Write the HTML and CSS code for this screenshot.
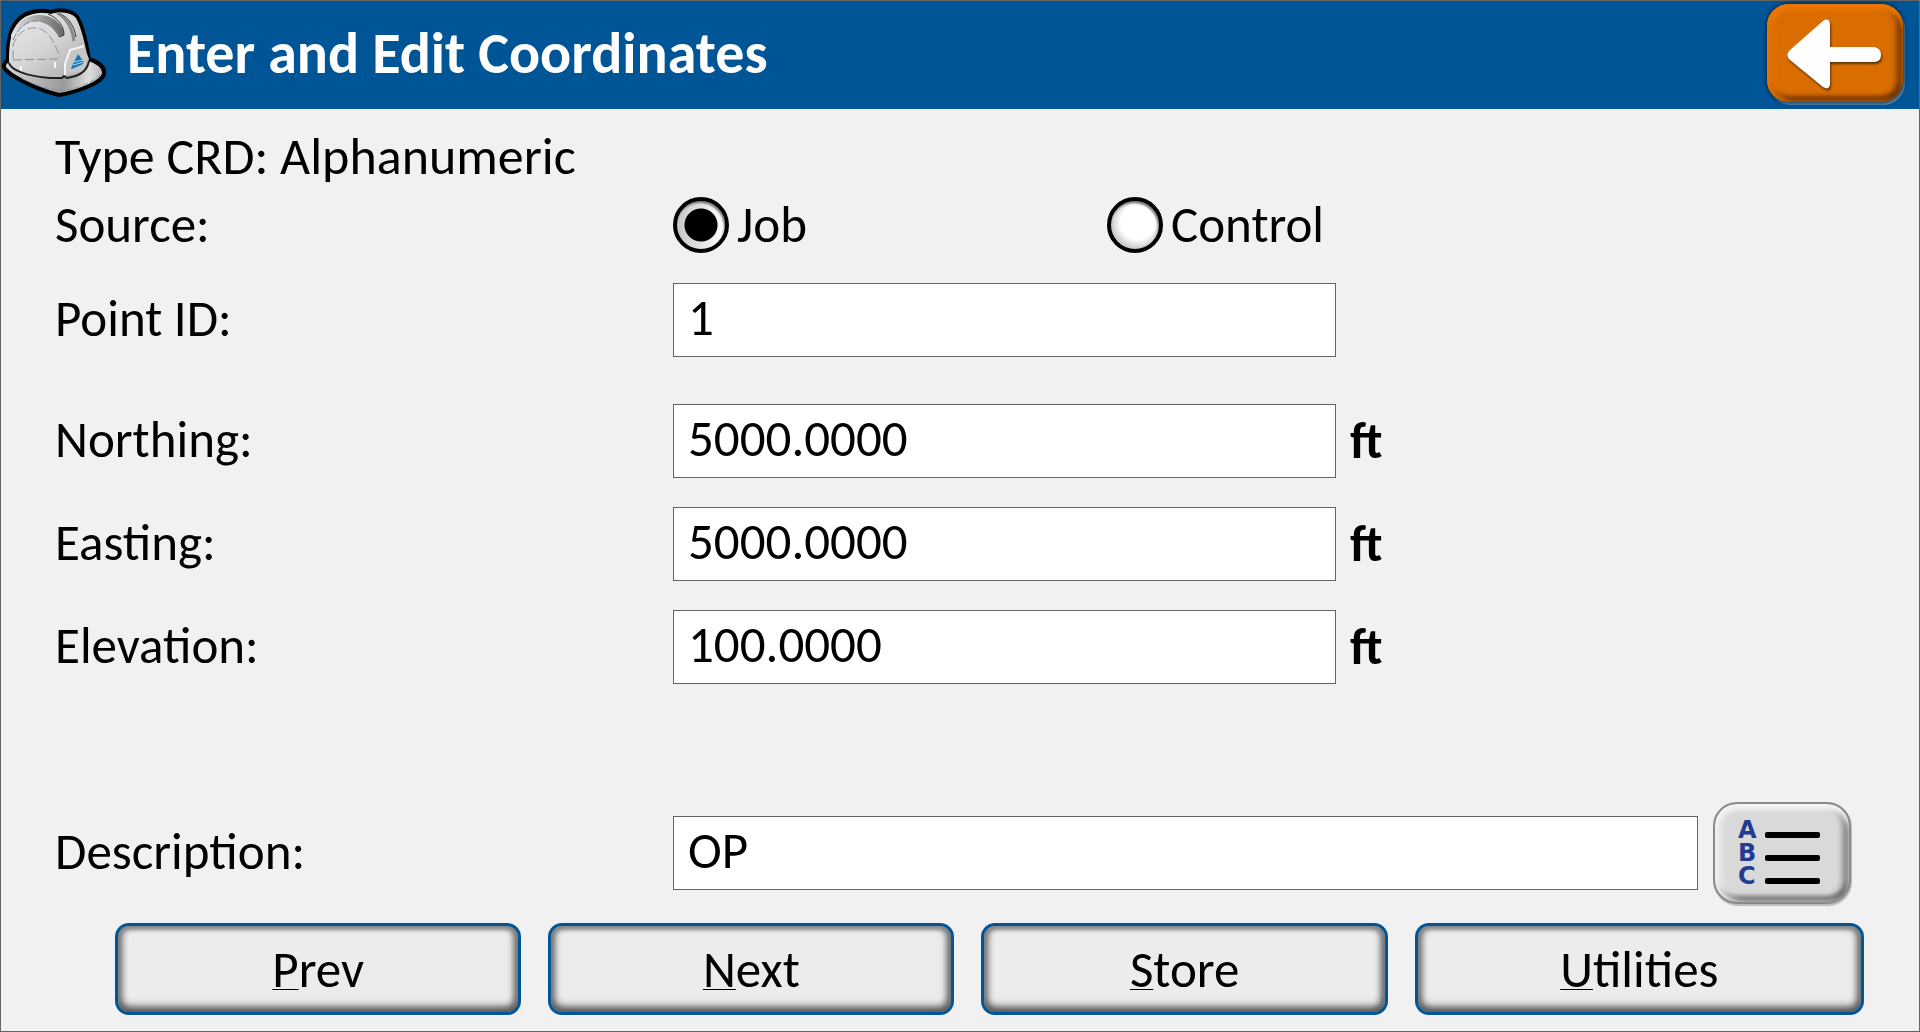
FILE: index.html
```html
<!DOCTYPE html>
<html lang="en">
<head>
<meta charset="utf-8">
<title>Enter and Edit Coordinates</title>
<link rel="stylesheet" href="styles.css">
</head>
<body>
<form class="window">
  <header class="titlebar">
    <svg class="logo" viewBox="0 0 106 96" aria-hidden="true">
      <defs>
        <linearGradient id="shell" x1="0" y1="0" x2="1" y2="1">
          <stop offset="0" stop-color="#ececec"/><stop offset=".5" stop-color="#d4d4d4"/><stop offset="1" stop-color="#a8a8a8"/>
        </linearGradient>
        <linearGradient id="brim" x1="0" y1="0" x2="1" y2="0">
          <stop offset="0" stop-color="#d8d8d8"/><stop offset=".6" stop-color="#9a9a9a"/><stop offset=".85" stop-color="#dedede"/><stop offset="1" stop-color="#b0b0b0"/>
        </linearGradient>
        <linearGradient id="ridge" x1="0" y1="0" x2="1" y2="0">
          <stop offset="0" stop-color="#e6e6e6"/><stop offset="1" stop-color="#666"/>
        </linearGradient>
      </defs>
      <path d="M7 60C6 40 9 27 18 18C25 11 39 8 50 11C58 8 71 9 76 16C82 25 85 42 88 58C97 61 104 66 103 73C101 82 76 91 58 94C46 91 28 84 16 77C7 72 2 67 3 64C4 61 5 60 7 60Z" fill="url(#brim)" stroke="#000" stroke-width="4" stroke-linejoin="round"/>
      <path d="M8 60C8 42 10 28 19 20C27 13 39 11 50 13C58 11 70 11 75 17C80 26 84 42 87 59C86 70 76 75 63 76C42 77 18 73 9 66Z" fill="url(#shell)"/>
      <path d="M10 34C16 20 27 14 38 14C52 14 62 23 63 34L58 36C52 26 44 20 34 20C23 21 15 30 11 43Z" fill="url(#ridge)"/>
      <path d="M47 13C57 17 63 25 63 34L58 36M58 12C67 16 73 24 75 36" fill="none" stroke="#333" stroke-width="1"/>
      <path d="M56 12C66 17 71 26 73 40" fill="none" stroke="#888" stroke-width="3"/>
      <path d="M12 39C18 26 26 20 35 20C44 20 53 25 58 35" fill="none" stroke="#71889b" stroke-dasharray="7 2"/>
      <path d="M12 58V44C17 31 26 26 35 27C47 28 54 42 59 56M12 59L57 58" fill="none" stroke="#8295a5" stroke-dasharray="9 3"/>
      <path d="M63 74L64 63L69 49L83 45L88 58Q87 66 80 71Z" fill="#c6c6c6"/>
      <path d="M64 74L64 63L69 49L83 45" fill="none" stroke="#f5f5f5" stroke-width="2"/>
      <path d="M20 65V72M54 61V67" stroke="#f8f8f8" stroke-width="2"/>
      <path d="M8 62C10 69 25 75 49 77L61 77L63 75L66 77C78 75 86 71 88 60" fill="none" stroke="#222" stroke-width="2"/>
      <path d="M20 77C35 84 47 89 61 89C77 89 92 81 100 73" fill="none" stroke="#8196a6" stroke-dasharray="6 2"/>
      <path d="M70 67L77 53L83 61L82 63L71 68Z" fill="#1475b9"/>
      <path d="M73 61L82 59M72 64L83 61" stroke="#bddcf0" stroke-width="1"/>
    </svg>
    <h1 class="title">Enter and Edit Coordinates</h1>
    <button class="back" type="button" aria-label="Back">
      <svg viewBox="0 0 136 98" aria-hidden="true">
        <path class="arrow" d="M23 46L56 17Q62 13 63 20V43H107Q114 44 114 51Q114 58 107 58H63V80Q62 87 56 83L23 56Q18 51 23 46Z"/>
      </svg>
    </button>
  </header>

  <main class="fields">
    <p class="line type">Type CRD: Alphanumeric</p>
    <div class="row line" role="radiogroup" aria-labelledby="source">
      <span id="source">Source:</span>
      <div class="options">
        <label class="option"><input type="radio" name="source" checked>Job</label>
        <label class="option"><input type="radio" name="source">Control</label>
      </div>
    </div>
    <div class="row point">
      <label for="point">Point ID:</label>
      <input class="box" id="point" type="text" value="1">
    </div>
    <div class="coords">
      <div class="row">
        <label for="north">Northing:</label>
        <input class="box" id="north" type="text" value="5000.0000"><b>ft</b>
      </div>
      <div class="row">
        <label for="east">Easting:</label>
        <input class="box" id="east" type="text" value="5000.0000"><b>ft</b>
      </div>
      <div class="row">
        <label for="elev">Elevation:</label>
        <input class="box" id="elev" type="text" value="100.0000"><b>ft</b>
      </div>
    </div>
    <div class="row">
      <label for="desc">Description:</label>
      <div class="describe">
        <input class="box" id="desc" type="text" value="OP">
        <button class="codes" type="button" aria-label="Description list">
          <span class="code"><span>A</span></span>
          <span class="code"><span>B</span></span>
          <span class="code"><span>C</span></span>
        </button>
      </div>
    </div>
  </main>

  <footer class="actions">
    <button class="action" type="button"><u>P</u>rev</button>
    <button class="action" type="button"><u>N</u>ext</button>
    <button class="action" type="button"><u>S</u>tore</button>
    <button class="action" type="button"><u>U</u>tilities</button>
  </footer>
</form>
</body>
</html>
```

FILE: styles.css
```css
* { box-sizing: border-box; }

body {
  margin: 0;
  background: #f1f1f1;
  color: #000;
  font: 51px/64px Calibri, Carlito, "Open Sans", sans-serif;
}

button, input { font: inherit; color: inherit; margin: 0; }

.window {
  min-height: 100vh;
  border: 1px solid #646464;
}

.titlebar {
  display: flex;
  align-items: flex-start;
  height: 108px;
  padding-right: 16px;
  background: #005596;
  color: #fff;
}

.logo { width: 106px; height: 96px; flex: none; }

.title {
  flex: 1;
  margin: 0 0 0 20px;
  font-size: 58px;
  line-height: 106px;
  font-weight: bold;
}

.back {
  width: 136px;
  height: 98px;
  margin-top: 3px;
  padding: 0;
  border: 0;
  border-radius: 22px;
  background: #d96d00;
  box-shadow: inset 0 6px 5px #ee7800, inset 6px 0 6px #e57200,
    inset 0 -6px 4px #6e3500, inset -6px 0 6px #6e3500,
    0 0 4px 1px #00274a, 2px 3px 1px #6a93b5;
}

.back svg { display: block; width: 100%; height: 100%; }

.arrow { fill: #fff; filter: drop-shadow(1px 2px 1px #5a3008); }

.fields { padding: 14px 56px 19px 54px; }

.line { margin: 0; height: 68px; line-height: 68px; }

.type { font-size: 52px; line-height: 66px; }

.row {
  display: grid;
  grid-template-columns: 618fr 663fr 527fr;
  align-items: center;
}

.row > label { padding-bottom: 2px; }

.row b { padding-left: 14px; }

.point { margin: 24px 0 47px; }

.coords { display: grid; gap: 29px; margin-bottom: 118px; }

.box {
  width: 100%;
  min-width: 0;
  height: 74px;
  padding: 0 14px 6px;
  border: 1px solid #646464;
  border-radius: 0;
  background: #fff;
}

.options, .describe { grid-column: 2 / 4; display: flex; }

.option {
  display: flex;
  align-items: center;
  gap: 8px;
  flex: 0 0 434px;
}

.option input {
  appearance: none;
  width: 56px;
  height: 56px;
  border: 4px solid #000;
  border-radius: 50%;
  background: radial-gradient(circle at 55% 45%, #fff 45%, #c4c4c4 72%);
  box-shadow: inset -1px 2px 2px #777;
}

.option input:checked {
  background: radial-gradient(circle, #000 16px, transparent 17px),
    linear-gradient(90deg, #c8c8c8, #fff);
}

.describe { align-items: center; gap: 15px; padding-right: 12px; }

.describe .box { flex: 1; }

.codes {
  display: flex;
  flex: none;
  flex-direction: column;
  justify-content: center;
  width: 138px;
  height: 102px;
  padding: 0 29px 0 23px;
  border: 2px solid #8a8a8a;
  border-radius: 24px;
  background: #d9d9d9;
  box-shadow: inset 0 6px 5px #f4f4f4, inset 6px 0 6px #f0f0f0,
    inset 0 -6px 4px #6e6e6e, inset -6px 0 6px #777, 1px 2px 1px #bbb;
}

.code {
  display: grid;
  grid-template-columns: 20px 1fr;
  align-items: center;
  gap: 7px;
  color: #213c90;
  font: bold 24px/23px "DejaVu Sans", sans-serif;
  text-align: left;
}

.code::after {
  content: "";
  height: 6px;
  margin-top: 10px;
  border-radius: 2px;
  background: #000;
}

.actions {
  display: grid;
  grid-template-columns: 406fr 406fr 406fr 449fr;
  gap: 27px;
  padding: 0 55px 15px 114px;
}

.action {
  height: 92px;
  padding: 2px 0 0;
  border: 3px solid #005596;
  border-radius: 14px;
  background: #ececec;
  box-shadow: inset 0 3px 4px #888, inset 0 -5px 8px #555,
    inset 4px 0 7px #888, inset -4px 0 7px #777;
}

.action u {
  text-decoration-thickness: 1px;
  text-underline-offset: 2px;
  text-decoration-skip-ink: none;
}
```
